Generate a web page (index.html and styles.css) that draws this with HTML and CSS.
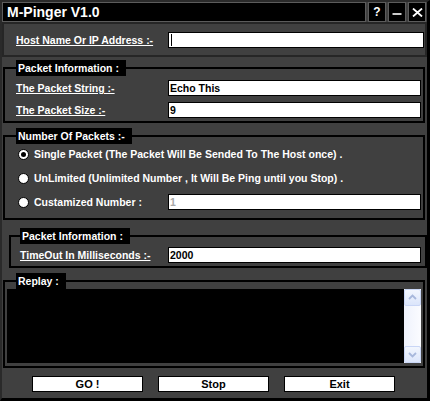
FILE: index.html
```html
<!DOCTYPE html>
<html>
<head>
<meta charset="utf-8">
<title>M-Pinger V1.0</title>
<link rel="stylesheet" href="styles.css">
</head>
<body>
<div class="window">
  <div class="titlebar">
    <div class="title">M-Pinger V1.0</div>
    <div class="tbtn tq">?</div>
    <div class="tbtn"><svg width="10" height="10" viewBox="0 0 10 10"><line x1="0.5" y1="7" x2="9.5" y2="7" stroke="#fff" stroke-width="1.6"/></svg></div>
    <div class="tbtn"><svg width="11" height="9" viewBox="0 0 11 9"><path d="M1 0.5 L10 8.5 M10 0.5 L1 8.5" stroke="#fff" stroke-width="1.8"/></svg></div>
  </div>

  <div class="hostrow">
    <span class="lbl u">Host Name Or IP Address :-</span>
    <div class="field host"><span class="caret"></span></div>
  </div>

  <fieldset class="group g1">
    <legend>Packet Information :</legend>
    <div class="rows">
      <span class="lbl u">The Packet String :-</span>
      <div class="field">Echo This</div>
      <span class="lbl u">The Packet Size :-</span>
      <div class="field">9</div>
    </div>
  </fieldset>

  <fieldset class="group g2">
    <legend>Number Of Packets :-</legend>
    <div class="rrows">
      <div class="ropt span"><span class="radio on"></span><span>Single Packet (The Packet Will Be Sended To The Host once) .</span></div>
      <div class="ropt span"><span class="radio"></span><span>UnLimited (Unlimited Number , It Will Be Ping until you Stop) .</span></div>
      <div class="ropt"><span class="radio"></span><span>Custamized Number :</span></div>
      <div class="field dis">1</div>
    </div>
  </fieldset>

  <fieldset class="group g3">
    <legend>Packet Information :</legend>
    <div class="rows r3">
      <span class="lbl u">TimeOut In Milliseconds :-</span>
      <div class="field">2000</div>
    </div>
  </fieldset>

  <fieldset class="group g4">
    <legend>Replay :</legend>
    <div class="replay">
      <div class="out"></div>
      <div class="vscroll">
        <div class="sbtn"><svg width="15" height="15" viewBox="0 0 15 15"><polyline points="4,9 7.5,5.5 11,9" fill="none" stroke="#a8b8dc" stroke-width="1.8"/></svg></div>
        <div class="track"></div>
        <div class="sbtn"><svg width="15" height="15" viewBox="0 0 15 15"><polyline points="4,6 7.5,9.5 11,6" fill="none" stroke="#a8b8dc" stroke-width="1.8"/></svg></div>
      </div>
    </div>
  </fieldset>

  <div class="buttons">
    <div class="btn">GO !</div>
    <div class="btn">Stop</div>
    <div class="btn">Exit</div>
  </div>
</div>
</body>
</html>
```

FILE: styles.css
```css
html, body {
  margin: 0;
  padding: 0;
  background: #000;
}

.window {
  width: 430px;
  height: 401px;
  box-sizing: border-box;
  background: #404040;
  border-style: solid;
  border-color: #2a2a2a #000 #000 #2a2a2a;
  border-width: 2px 3px 3px 2px;
  display: flex;
  flex-direction: column;
  font-family: "Liberation Sans", Arial, sans-serif;
  font-weight: bold;
  font-size: 10.5px;
  color: #fff;
  overflow: hidden;
}

.titlebar {
  display: flex;
  gap: 2px;
  height: 20px;
  padding-right: 1px;
  flex: none;
}

.title {
  flex: 1;
  background: #000;
  border: 1px solid #5c5c5c;
  font-size: 14px;
  line-height: 18px;
  padding-left: 4px;
}

.tbtn {
  width: 18px;
  box-sizing: border-box;
  background: #000;
  border: 1px solid #5c5c5c;
  display: flex;
  align-items: center;
  justify-content: center;
}

.tq {
  font-size: 12px;
  line-height: 18px;
}

.hostrow {
  flex: none;
  height: 35px;
  box-sizing: border-box;
  border: 2px solid #262626;
  display: grid;
  grid-template-columns: 152px 1fr;
  align-items: center;
  padding: 0 1px 0 12px;
}

.lbl.u {
  text-decoration: underline;
}

.field {
  height: 16px;
  box-sizing: border-box;
  background: #fff;
  border: 1px solid #000;
  color: #000;
  line-height: 14px;
  padding-left: 1px;
  white-space: nowrap;
}

.field.dis {
  color: #a8a8a8;
}

.caret {
  display: inline-block;
  width: 1px;
  height: 12px;
  background: #000;
  margin-left: 1px;
  vertical-align: -2px;
}

.group {
  min-width: 0;
  border: 2px solid #000;
  flex: none;
}

.group legend {
  background: #000;
  height: 16px;
  line-height: 16px;
  box-sizing: border-box;
  padding: 0 7px 0 2px;
  white-space: nowrap;
}

.rows {
  display: grid;
  grid-template-columns: 152px 1fr;
  row-gap: 6px;
  align-items: center;
}

.g1 {
  margin: 3px 2px 0 1px;
  padding: 4px 2px 3px 11px;
}

.g2 {
  margin: 5px 2px 0 1px;
  padding: 2px 2px 8px 11px;
}

.rrows {
  display: grid;
  grid-template-columns: 152px 1fr;
  row-gap: 8px;
  align-items: center;
}

.ropt {
  display: flex;
  align-items: center;
  height: 16px;
  white-space: nowrap;
}

.ropt.span {
  grid-column: 1 / 3;
}

.radio {
  width: 11px;
  height: 11px;
  box-sizing: border-box;
  border-radius: 50%;
  background: #fff;
  border: 1px solid #000;
  margin: 0 5px 0 2px;
  display: flex;
  align-items: center;
  justify-content: center;
  flex: none;
}

.radio.on::after {
  content: "";
  width: 5px;
  height: 5px;
  border-radius: 50%;
  background: #000;
}

.g3 {
  margin: 8px 0 0 7px;
  padding: 3px 4px 3px 9px;
}

.r3 {
  grid-template-columns: 148px 1fr;
}

.g4 {
  margin: 5px 2px 0 1px;
  padding: 0 2px 3px 2px;
}

.g4 legend {
  margin-left: 9px;
}

.replay {
  display: flex;
  height: 74px;
}

.out {
  flex: 1;
  background: #000;
}

.vscroll {
  width: 17px;
  display: flex;
  flex-direction: column;
  background: linear-gradient(to right, #eef2fc, #fbfcff);
}

.sbtn {
  height: 17px;
  box-sizing: border-box;
  border: 1px solid #c9d6f6;
  border-radius: 2px;
  background: linear-gradient(#f2f6fe, #dbe5fb);
  display: flex;
  align-items: center;
  justify-content: center;
}

.track {
  flex: 1;
}

.buttons {
  display: flex;
  gap: 15px;
  margin-top: 8px;
  padding-left: 30px;
  flex: none;
}

.btn {
  width: 111px;
  height: 16px;
  box-sizing: border-box;
  background: #fff;
  border: 1px solid #000;
  color: #000;
  text-align: center;
  line-height: 14px;
  font-size: 11px;
}
```
